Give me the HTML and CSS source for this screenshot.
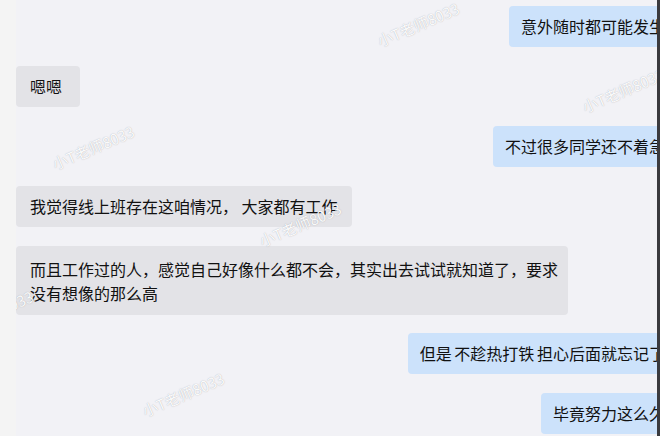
FILE: index.html
```html
<!DOCTYPE html>
<html lang="zh-CN">
<head>
<meta charset="utf-8">
<title>聊天记录</title>
<link rel="stylesheet" href="styles.css">
</head>
<body>
<div class="frame">
  <div class="strip"></div>
  <div class="viewport">
    <div class="list">
      <div class="msg msg-right"><div class="bubble bubble-me">意外随时都可能发生</div></div>
      <div class="msg msg-left"><div class="bubble bubble-other bubble-short">嗯嗯</div></div>
      <div class="msg msg-right"><div class="bubble bubble-me">不过很多同学还不着急</div></div>
      <div class="msg msg-left"><div class="bubble bubble-other">我觉得线上班存在这咱情况， 大家都有工作</div></div>
      <div class="msg msg-left"><div class="bubble bubble-other bubble-wide">而且工作过的人，感觉自己好像什么都不会，其实出去试试就知道了，要求没有想像的那么高</div></div>
      <div class="msg msg-right msg-gap-sm"><div class="bubble bubble-me">但是&#8198;不趁热打铁&#8198;担心后面就忘记了</div></div>
      <div class="msg msg-right"><div class="bubble bubble-me">毕竟努力这么久</div></div>
    </div>
    <div class="wm wm1">小T老师8033</div>
    <div class="wm wm2">小T老师8033</div>
    <div class="wm wm3">小T老师8033</div>
    <div class="wm wm4">小T老师8033</div>
    <div class="wm wm5">小T老师8033</div>
    <div class="wm wm6">小T老师8033</div>
  </div>
  <div class="edge"></div>
</div>
</body>
</html>
```

FILE: styles.css
```css
html, body {
  margin: 0;
  padding: 0;
  width: 660px;
  height: 436px;
  overflow: hidden;
  background: #f4f4f5;
}

.frame {
  display: flex;
  width: 660px;
  height: 436px;
  font-family: "Noto Sans CJK SC", "Microsoft YaHei", sans-serif;
  color: #111;
}

.strip {
  width: 16px;
  flex: none;
  background: #f4f4f4;
}

.viewport {
  position: relative;
  flex: 1;
  overflow: hidden;
  background: #f2f2f6;
}

.list {
  width: 661px;
  display: flex;
  flex-direction: column;
  gap: 19px;
  padding-top: 6px;
}

.msg {
  display: flex;
}

.msg-left {
  justify-content: flex-start;
}

.msg-right {
  justify-content: flex-end;
}

.msg-gap-sm {
  margin-top: -1px;
}

.bubble {
  font-size: 16px;
  line-height: 23px;
  padding: 9px 12px 9px 12px;
  border-radius: 4px;
  white-space: nowrap;
}

.bubble-other {
  background: #e3e3e7;
  padding-left: 14px;
  padding-right: 14px;
}

.bubble-short {
  padding-right: 18px;
}

.bubble-me {
  background: #cce2fb;
}

.bubble-wide {
  white-space: normal;
  width: 530px;
  line-height: 24px;
  padding: 11px 8px 10px 14px;
}

.wm {
  position: absolute;
  font-family: "Noto Sans CJK SC", sans-serif;
  font-size: 15px;
  color: rgba(255, 255, 255, 0.95);
  text-shadow: 0 0 1px rgba(110, 110, 120, 0.55);
  transform: rotate(-23deg);
  transform-origin: left bottom;
  white-space: nowrap;
  pointer-events: none;
}

.wm1 { left: 366px; top: 30px; }
.wm2 { left: 571px; top: 96px; }
.wm3 { left: 41px; top: 153px; }
.wm4 { left: -60px; top: 318px; }
.wm5 { left: 131px; top: 400px; }
.wm6 { left: 248px; top: 230px; }

.edge {
  width: 3px;
  flex: none;
  background: #3a3a3e;
}
```
